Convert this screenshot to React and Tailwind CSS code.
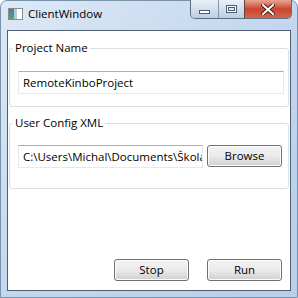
import React from "react";

const font = { fontFamily: '"Segoe UI", "Open Sans", "Noto Sans", sans-serif' };

function WinButton({ children, className = "" }) {
  return (
    <button
      className={`h-[22px] w-[75px] shrink-0 rounded-[3px] border border-[#707070] bg-gradient-to-b from-[#f2f2f2] via-[#ebebeb] to-[#cfcfcf] text-[11.5px] text-black shadow-[inset_0_0_0_1px_#fcfcfc] ${className}`}
    >
      {children}
    </button>
  );
}

function TextBox({ value, className = "" }) {
  return (
    <div
      className={`h-[23px] overflow-hidden border border-[#e3e9ef] border-t-[#abadb3] bg-white pl-[4px] text-[11.5px] leading-[21px] text-black ${className}`}
    >
      <div className="overflow-hidden whitespace-nowrap text-clip">{value}</div>
    </div>
  );
}

function Group({ title, className = "", children }) {
  return (
    <fieldset
      className={`mx-px rounded-[3px] border border-[#d5dfe5] pl-[8px] pr-[4px] shadow-[inset_0_0_0_1px_#ffffff] ${className}`}
    >
      <legend className="-ml-[5px] px-[2px] text-[11.5px] leading-[16px] text-black">{title}</legend>
      {children}
    </fieldset>
  );
}

export default function App() {
  return (
    <div className="h-[298px] w-[298px] bg-white" style={font}>
      <div className="flex h-full flex-col rounded-t-[7px] border border-[#7a93ad] bg-gradient-to-br from-[#dde9f6] via-[#c3d7ee] to-[#b7cfea] px-[6px] pb-[6px]">
        {/* title bar */}
        <div className="relative flex h-[29px] items-start">
          <div className="mt-[7px] ml-[1px] flex h-[12px] w-[15px] border border-[#8c8c8c] bg-white">
            <div className="w-[5px] bg-gradient-to-b from-[#3c7fb8] to-[#5aa06a]" />
            <div className="w-[3px] bg-[#b9c9d6]" />
          </div>
          <span className="ml-[5px] mt-[5px] text-[11.5px] leading-[16px] text-black">ClientWindow</span>

          <div className="absolute -top-px right-[-1px] flex h-[19px] overflow-hidden rounded-b-[5px] border border-t-0 border-[#5d6f85]">
            <div className="flex w-[28px] items-center justify-center border-r border-[#8294aa] bg-gradient-to-b from-[#e9f0f8] via-[#d3dfec] to-[#bccde2]">
              <div className="mt-[5px] h-[4px] w-[11px] border border-[#4d5c70] bg-white" />
            </div>
            <div className="flex w-[26px] items-center justify-center border-r border-[#6d4040] bg-gradient-to-b from-[#e9f0f8] via-[#d3dfec] to-[#bccde2]">
              <div className="h-[8px] w-[11px] border border-[#4d5c70] bg-white p-px">
                <div className="h-full w-full border border-[#4d5c70] bg-[#dfe7f0]" />
              </div>
            </div>
            <div className="flex w-[46px] items-center justify-center bg-gradient-to-b from-[#e8a493] via-[#c9452f] to-[#d5634a]">
              <svg width="14" height="11" viewBox="0 0 14 11">
                <path
                  d="M2 1 L12 10 M12 1 L2 10"
                  stroke="#5a1d12"
                  strokeWidth="4"
                  strokeLinecap="square"
                />
                <path
                  d="M2 1 L12 10 M12 1 L2 10"
                  stroke="#ffffff"
                  strokeWidth="2"
                  strokeLinecap="square"
                />
              </svg>
            </div>
          </div>
        </div>

        {/* client area */}
        <div className="flex flex-1 flex-col border border-[#4f5f73] bg-white">
          <Group title="Project Name" className="mt-[9px] pb-[12px]">
            <TextBox value="RemoteKinboProject" className="mt-[15px]" />
          </Group>

          <Group title="User Config XML" className="mt-[8px] h-[74px]">
            <div className="mt-[14px] flex items-start gap-[4px]">
              <TextBox value="C:\Users\Michal\Documents\Škola\RemoteKinbo\config.xml" className="w-[185px] shrink-0" />
              <WinButton>Browse</WinButton>
            </div>
          </Group>

          <div className="mt-auto mb-[9px] mr-[8px] flex justify-end gap-[18px]">
            <WinButton>Stop</WinButton>
            <WinButton>Run</WinButton>
          </div>
        </div>
      </div>
    </div>
  );
}
